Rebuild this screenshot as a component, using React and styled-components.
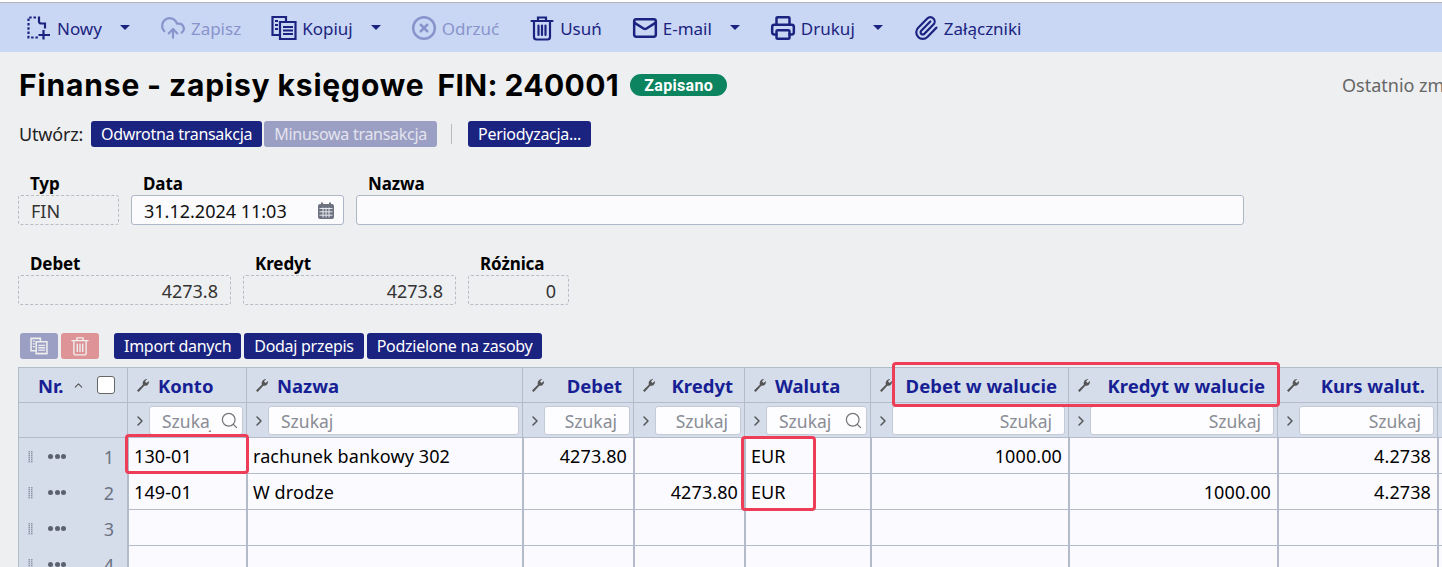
import React from 'react';
import styled, { createGlobalStyle } from 'styled-components';
import { CloudUpload, CircleX, Mail, Printer, Paperclip, Search, ChevronRight, ChevronUp } from 'lucide-react';

const Global = createGlobalStyle`
  html, body { margin: 0; padding: 0; background: #eeeff1; overflow: hidden; }
  body { font-family: "Noto Sans", sans-serif; color: #000; }
  * { box-sizing: border-box; }
`;
const Page = styled.div`
  position: relative; width: 1442px; height: 567px; overflow: hidden;
`;
const TopEdge = styled.div`
  height: 3px; background: #fff; border-top: 1px solid #fff; border-bottom: 1px solid #b5b5b5;
`;
const Toolbar = styled.div`
  height: 49px; background: #c9d7f4; display: flex; align-items: center; padding-left: 26px; gap: 30px;
`;
const ToolButton = styled.div`
  display: flex; align-items: center; gap: 5px;
  color: ${p => p.$off ? '#8a94cc' : '#1b2380'};
  font-size: 17px; white-space: nowrap;
  svg { flex: none; }
`;
const ToolLabel = styled.span` padding-top: 1px; `;
const Caret = styled.span`
  width: 0; height: 0; border-left: 5.5px solid transparent; border-right: 5.5px solid transparent;
  border-top: 5px solid #1b2380; margin-left: 13px;
`;
const TitleRow = styled.div`
  height: 66px; display: flex; align-items: center; padding-left: 19px; position: relative; white-space: nowrap;
`;
const Title = styled.h1`
  margin: 0; font-family: Inter, sans-serif; font-size: 30px; font-weight: 700; letter-spacing: 0.85px; word-spacing: -1px;
`;
const TitleCode = styled.span` letter-spacing: 0.4px; margin-left: 13px; `;
const Badge = styled.span`
  margin-left: 11px; height: 22px; width: 97px; border-radius: 11px; background: #0c8460; color: #fff;
  font-family: Roboto, sans-serif; font-weight: 700; font-size: 16px; display: flex; align-items: center; justify-content: center; letter-spacing: .3px;
`;
const LastChange = styled.span`
  position: absolute; left: 1342px; top: 21px; color: #666; font-size: 18px; line-height: 24px;
`;
const CreateRow = styled.div`
  height: 26px; margin-top: 3px; display: flex; align-items: center; padding-left: 19px;
`;
const CreateLabel = styled.span` margin-right: 8px; color: #222; font-size: 18px; letter-spacing: -.2px; `;
const Btn = styled.div`
  height: 26px; padding: 0 10px; border-radius: 3px; background: ${p => p.$off ? '#9c9fc4' : '#1b2380'};
  color: ${p => p.$off ? '#e3e4ee' : '#fff'}; font-size: 16px; letter-spacing: -.28px;
  display: flex; align-items: center; margin-right: ${p => p.$mr ?? 3}px; white-space: nowrap; justify-content: center;
`;
const Sep = styled.span` width: 1px; height: 20px; background: #bbb; margin: 0 16px 0 14px; `;
const FieldRow = styled.div`
  display: flex; gap: 12px; padding-left: 18px; margin-top: ${p => p.$mt}px;
`;
const Field = styled.div` width: ${p => p.$w}px; `;
const Label = styled.div`
  height: 18px; line-height: 18px; padding-left: 12px; font-size: 17px; font-weight: 700; margin-bottom: 2px; letter-spacing: -.1px;
`;
const ReadBox = styled.div`
  height: 30px; border: 1px dashed #b7bcc6; border-radius: 3px; padding: 1px 12px 0; color: #333;
  display: flex; align-items: center; justify-content: ${p => p.$right ? 'flex-end' : 'flex-start'}; font-size: 18px;
`;
const InputBox = styled.div`
  height: 30px; border: 1px solid #aeb6c8; border-radius: 3px; background: #fbfbfe; padding: 1px 8px 0 12px;
  display: flex; align-items: center; justify-content: space-between; font-size: 18px; color: #111;
`;
const ActionRow = styled.div`
  display: flex; height: 26px; margin-top: 28px; padding-left: 20px;
`;
const IconBtn = styled.div`
  width: 38px; height: 26px; border-radius: 3px; background: ${p => p.$red ? '#de9397' : '#9c9fc4'}; color: #eee;
  display: flex; align-items: center; justify-content: center; margin-right: ${p => p.$mr}px;
`;
const Grid = styled.div`
  display: grid; margin: 8px 0 0 18px; width: 1424px;
  grid-template-columns: 109px 119px 276px 111px 111px 126px 198px 209px 160px 5px;
  grid-template-rows: 36px 35px;
  grid-auto-rows: 36px;
`;
const HeadCell = styled.div`
  background: #d5ddeb; border-top: 1px solid #b4bccb; border-left: 1px solid #b4bccb; border-bottom: 1px solid #b4bccb;
  display: flex; align-items: center; padding: 0 ${p => p.$pr ?? 9}px 0 8px; color: #171f94; font-weight: 700; font-size: 18.5px;
  justify-content: ${p => p.$left ? 'flex-start' : 'space-between'}; white-space: nowrap; gap: ${p => p.$left ? 8 : 4}px; height: 36px;
`;
const FilterCell = styled.div`
  background: #d5ddeb; border-left: 1px solid #b4bccb; border-bottom: 1px solid #b4bccb;
  display: flex; align-items: center; gap: 1px; padding: 1px 3px 0 4px; height: 35px; color: #555;
  svg { flex: none; }
`;
const FilterInput = styled.div`
  flex: 1; height: 29px; background: #fdfdff; border: 1px solid #c4cad6; border-radius: 3px; color: #8a8d95; font-size: 17.5px;
  display: flex; align-items: center; min-width: 0; overflow: hidden; padding: 0 ${p => p.$right ? 12 : 0}px 0 12px;
  justify-content: ${p => p.$right ? 'flex-end' : 'flex-start'}; position: relative;
`;
const FilterText = styled.span`
  overflow: hidden; white-space: nowrap; max-width: ${p => p.$max ? `${p.$max}px` : 'none'};
`;
const SearchSpot = styled(Search)` position: absolute; right: 3px; top: 4px; background: #fdfdff; color: #777; `;
const NrCell = styled.div`
  background: #d5ddeb; border-left: 1px solid #b4bccb; display: flex; align-items: center; padding: 1px 13px 0 9px; color: #6b7283; font-size: 18px; height: 36px;
`;
const GripIcon = styled.svg` flex: none; margin-right: 15px; `;
const Dots = styled.span`
  display: flex; gap: 1.5px; flex: 1;
  i { width: 5px; height: 5px; border-radius: 50%; background: #5c6270; }
`;
const Cell = styled.div`
  background: #fbfbff; border-left: 2px solid #b4bccb; border-bottom: 1px solid #b4bccb; display: flex; align-items: center;
  padding: 1px 6px 0 5px; justify-content: ${p => p.$right ? 'flex-end' : 'flex-start'}; font-size: 18px; letter-spacing: .1px; color: #000; height: 36px;
  white-space: nowrap;
`;
const Check = styled.span`
  width: 18px; height: 18px; flex: none; border: 1px solid #666; border-radius: 3px; background: #fff;
`;
const NrHead = styled.span` display: flex; align-items: center; margin-left: 11px; flex: 1; `;
const NrSort = styled(ChevronUp)` margin-left: 8px; color: #555; `;
const Mark = styled.div`
  position: absolute; left: ${p => p.$x}px; top: ${p => p.$y}px; width: ${p => p.$w}px; height: ${p => p.$h}px;
  border: 3px solid #ee3d57; border-radius: 4px;
`;

const NewIcon = () => (
  <svg width="26" height="26" viewBox="0 0 26 26" fill="none" stroke="currentColor" strokeWidth="2.2">
    <path d="M10 2.500H2.500V22.500H13" strokeDasharray="2.500 1.800" />
    <path d="M13 1.500v5c0 1.300 1 2 2.500 2H19v5" />
    <path d="M17.500 15v9.500M12.500 20H24" />
  </svg>
);
const CopyIcon = ({ size = 26 }) => (
  <svg width={size} height={size} viewBox="0 0 26 26" fill="none" stroke="currentColor" strokeWidth="2.2">
    <path d="M9 20H1.500V2H15v4.500" />
    <path d="M9 7h15.500v17H9z" />
    <path d="M4 6h3M4 10h3M4 14h3M12 12h10M12 15.500h10M12 19h10" strokeWidth="1.900" />
  </svg>
);
const TrashIcon = ({ size = 26, w = 2.2 }) => (
  <svg width={size} height={size} viewBox="0 0 26 26" fill="none" stroke="currentColor" strokeWidth={w} strokeLinecap="round">
    <path d="M2.500 6H23.500" />
    <path d="M9 6V2.500h8V6" />
    <path d="M5 6v16c0 1.500 1 2.500 2.500 2.500h11c1.500 0 2.500-1 2.500-2.500V6" />
    <path d="M9.500 10.500v9.500M13 10.500v9.500M16.500 10.500v9.500" />
  </svg>
);
const CalendarIcon = () => (
  <svg width="18" height="18" viewBox="0 0 18 18">
    <rect x="1" y="2" width="16" height="15" rx="2" fill="#6c7280" />
    <rect x="4" y="0.500" width="2" height="3" fill="#6c7280" />
    <rect x="12" y="0.500" width="2" height="3" fill="#6c7280" />
    <path d="M2.500 6.500h13M2.500 9.800h13M2.500 13.200h13M6 5.500v10M9 5.500v10M12 5.500v10" stroke="#e8e9ee" strokeWidth="1" />
  </svg>
);
const WrenchIcon = () => (
  <svg width="14" height="15" viewBox="0 0 14 15" fill="#555" style={{ flex: 'none' }}>
    <path d="M1 12.500 L6.800 6.700 C6.200 4 7.500 1.500 10.500 1 L11.300 1.100 L9 3.300 L10.500 5 L13 2.900 C13.300 6 11 8.300 8.300 7.800 L2.600 14 Z" />
  </svg>
);
const Grip = () => (
  <GripIcon width="5" height="12" viewBox="0 0 5 12" fill="#8d94a3">
    {[0, 2, 4, 6, 8, 10].map(y => (
      <React.Fragment key={y}>
        <rect x="0.500" y={y} width="1.500" height="1.400" />
        <rect x="3" y={y} width="1.500" height="1.400" />
      </React.Fragment>
    ))}
  </GripIcon>
);
const Filter = ({ right, icon, max }) => (
  <FilterCell>
    <ChevronRight size={16} strokeWidth={2.2} />
    <FilterInput $right={right}>
      <FilterText $max={max}>Szukaj</FilterText>
      {icon && <SearchSpot size={19} strokeWidth={1.6} />}
    </FilterInput>
  </FilterCell>
);
const Head = ({ text, pr, left }) => (
  <HeadCell $pr={pr} $left={left}>
    <WrenchIcon />
    <span>{text}</span>
  </HeadCell>
);
const rows = [
  ['130-01', 'rachunek bankowy 302', '4273.80', '', 'EUR', '1000.00', '', '4.2738'],
  ['149-01', 'W drodze', '', '4273.80', 'EUR', '', '1000.00', '4.2738'],
  ['', '', '', '', '', '', '', ''],
  ['', '', '', '', '', '', '', ''],
];
const rightCol = [false, false, true, true, false, true, true, true];

export default function App() {
  return (
    <Page>
      <Global />
      <TopEdge />
      <Toolbar>
        <ToolButton><NewIcon /><ToolLabel>Nowy</ToolLabel><Caret /></ToolButton>
        <ToolButton $off><CloudUpload size={26} strokeWidth={2} /><ToolLabel>Zapisz</ToolLabel></ToolButton>
        <ToolButton><CopyIcon /><ToolLabel>Kopiuj</ToolLabel><Caret /></ToolButton>
        <ToolButton $off><CircleX size={26} strokeWidth={2.3} /><ToolLabel>Odrzuć</ToolLabel></ToolButton>
        <ToolButton><TrashIcon /><ToolLabel>Usuń</ToolLabel></ToolButton>
        <ToolButton><Mail size={26} strokeWidth={2.3} /><ToolLabel>E-mail</ToolLabel><Caret /></ToolButton>
        <ToolButton><Printer size={26} strokeWidth={2.3} /><ToolLabel>Drukuj</ToolLabel><Caret /></ToolButton>
        <ToolButton><Paperclip size={26} strokeWidth={2} /><ToolLabel>Załączniki</ToolLabel></ToolButton>
      </Toolbar>
      <TitleRow>
        <Title>Finanse - zapisy księgowe<TitleCode>FIN: 240001</TitleCode></Title>
        <Badge>Zapisano</Badge>
        <LastChange>Ostatnio zm</LastChange>
      </TitleRow>
      <CreateRow>
        <CreateLabel>Utwórz:</CreateLabel>
        <Btn $mr={2}>Odwrotna transakcja</Btn>
        <Btn $off $mr={0}>Minusowa transakcja</Btn>
        <Sep />
        <Btn>Periodyzacja...</Btn>
      </CreateRow>
      <FieldRow $mt={28}>
        <Field $w={101}><Label>Typ</Label><ReadBox>FIN</ReadBox></Field>
        <Field $w={213}><Label>Data</Label><InputBox>31.12.2024 11:03<CalendarIcon /></InputBox></Field>
        <Field $w={888}><Label>Nazwa</Label><InputBox /></Field>
      </FieldRow>
      <FieldRow $mt={30}>
        <Field $w={213}><Label>Debet</Label><ReadBox $right>4273.8</ReadBox></Field>
        <Field $w={213}><Label>Kredyt</Label><ReadBox $right>4273.8</ReadBox></Field>
        <Field $w={101}><Label>Różnica</Label><ReadBox $right>0</ReadBox></Field>
      </FieldRow>
      <ActionRow>
        <IconBtn $mr={3}><CopyIcon size={18} /></IconBtn>
        <IconBtn $red $mr={15}><TrashIcon size={20} w={1.8} /></IconBtn>
        <Btn>Import danych</Btn>
        <Btn>Dodaj przepis</Btn>
        <Btn>Podzielone na zasoby</Btn>
      </ActionRow>
      <Grid>
        <HeadCell $pr={12}>
          <NrHead>Nr.<NrSort size={13} /></NrHead><Check />
        </HeadCell>
        <Head text="Konto" left />
        <Head text="Nazwa" left />
        <Head text="Debet" pr={11} />
        <Head text="Kredyt" pr={11} />
        <Head text="Waluta" left />
        <Head text="Debet w walucie" pr={11} />
        <Head text="Kredyt w walucie" pr={12} />
        <Head text="Kurs walut." pr={12} />
        <HeadCell />

        <FilterCell />
        <Filter icon max={49} />
        <Filter />
        <Filter right />
        <Filter right />
        <Filter icon />
        <Filter right />
        <Filter right />
        <Filter right />
        <FilterCell />

        {rows.map((r, i) => (
          <React.Fragment key={i}>
            <NrCell><Grip /><Dots><i /><i /><i /></Dots>{i + 1}</NrCell>
            {r.map((c, j) => <Cell key={j} $right={rightCol[j]}>{c}</Cell>)}
            <Cell />
          </React.Fragment>
        ))}
      </Grid>
      <Mark $x={125} $y={434} $w={124} $h={40} />
      <Mark $x={741} $y={436} $w={75} $h={75} />
      <Mark $x={892} $y={362} $w={388} $h={45} />
    </Page>
  );
}
